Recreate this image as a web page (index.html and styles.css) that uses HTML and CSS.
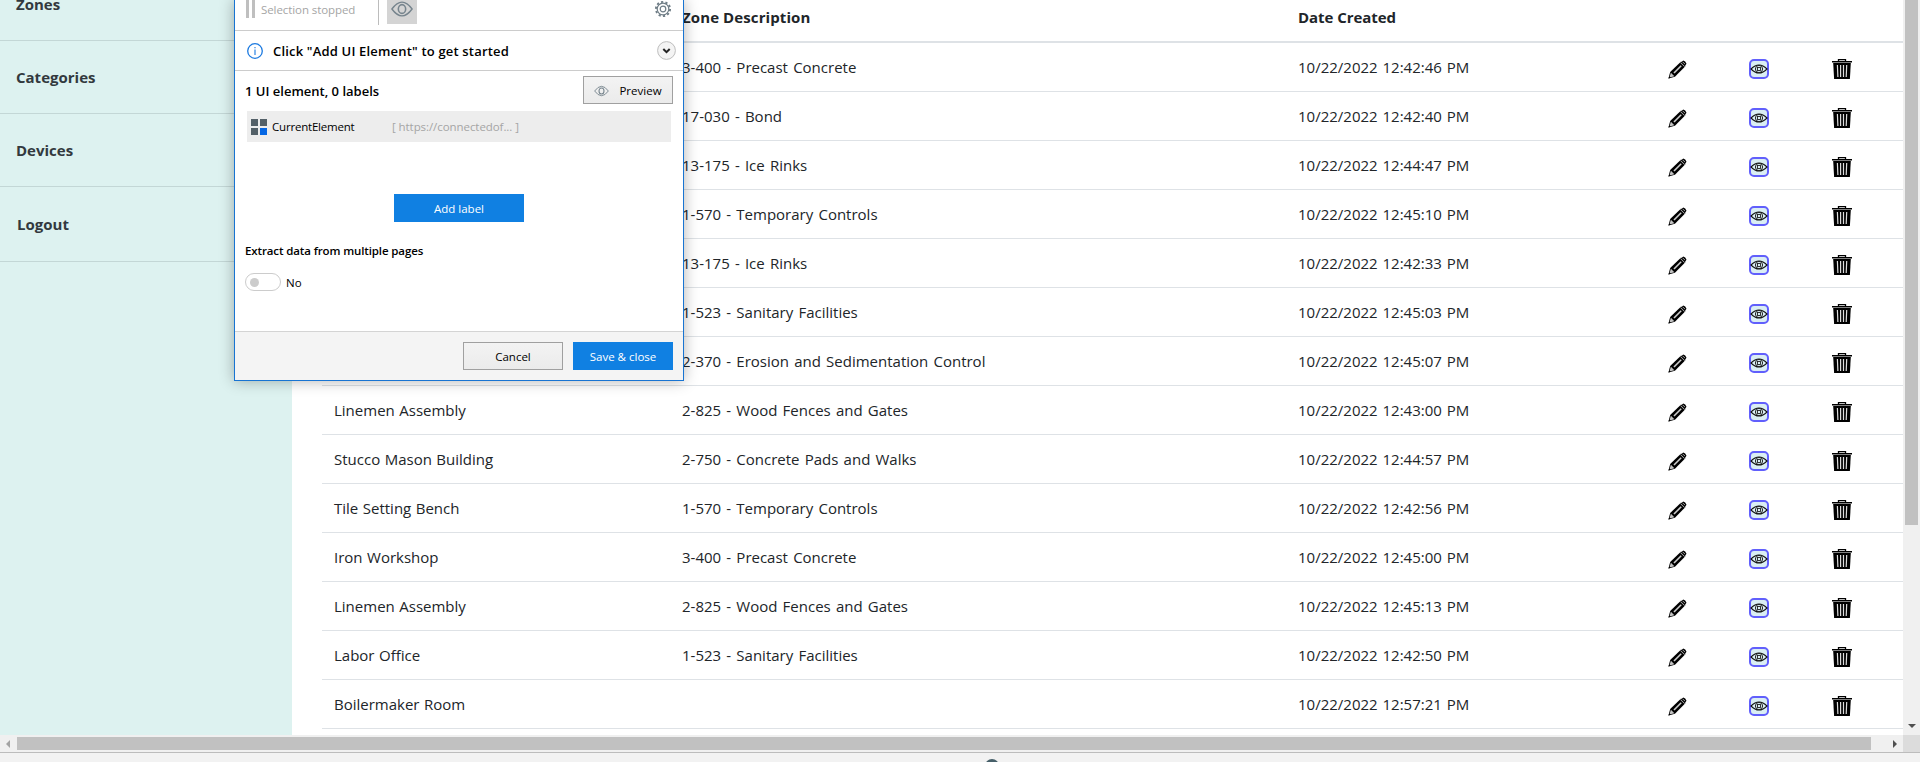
FILE: index.html
```html
<!DOCTYPE html>
<html lang="en">
<head>
<meta charset="utf-8">
<title>Zones</title>
<link rel="stylesheet" href="styles.css">
</head>
<body>
<svg width="0" height="0" class="defs">
  <symbol id="pencil" viewBox="0 0 20 20">
    <path d="M.5 19.500l1.800-6.800L13.800 1.500l4.700 4.700L7.300 17.700z" fill="#000"/>
    <path d="M1.500 18.500l1.500-5 3.700 3.700z" fill="#c4c4c4"/>
    <path d="M.5 19.500l.7-2.500 1.800 1.800z" fill="#000"/>
    <path d="M6.300 13.700l7.600-7.600" stroke="#ccc" stroke-width="1.700"/>
    <path d="M14.300 2l1.700-1.500q2.500.5 3.500 3.500l-1.600 2z" fill="#000"/>
    <path d="M13 2.600l4.400 4.400" stroke="#ccc" stroke-width=".9"/>
    <path d="M16 2.400l1.600 1.600" stroke="#ccc" stroke-width="1"/>
  </symbol>
  <symbol id="view" viewBox="0 0 20 20">
    <rect x="1" y="1" width="18" height="18" rx="4" fill="#daeef3" stroke="#615ffc" stroke-width="2"/>
    <path d="M2 10q8-8 16 0q-8 8-16 0z" fill="none" stroke="#111" stroke-width="1.100"/>
    <circle cx="10" cy="10" r="3.600" fill="none" stroke="#222" stroke-width="1"/>
    <rect x="8.500" y="8.500" width="3" height="3" fill="none" stroke="#222" stroke-width=".9"/>
  </symbol>
  <symbol id="trash" viewBox="0 0 20 20">
    <path d="M6.500 2V.6h7V2" fill="none" stroke="#000" stroke-width="1.300"/>
    <path d="M0 2h20v1.500H0z" fill="#000"/>
    <path d="M1.200 4h17.600L17.900 20H2.100z" fill="#000"/>
    <path d="M5.400 6l.5 12M8.600 6v12M11.500 6v12M14.700 6l-.5 12" stroke="#ddd" stroke-width="1.200"/>
  </symbol>
  <symbol id="eye" viewBox="0 0 24 18">
    <path d="M1 9q11-15 22 0q-11 15-22 0z" fill="none" stroke="#76848d" stroke-width="1.500"/>
    <ellipse cx="12" cy="9" rx="4" ry="4.800" fill="none" stroke="#76848d" stroke-width="1.700"/>
  </symbol>
</svg>
<div class="viewport">
  <nav class="sidebar">
    <a class="nav zones">Zones</a>
    <a class="nav">Categories</a>
    <a class="nav">Devices</a>
    <a class="nav logout">Logout</a>
  </nav>
  <main class="main">
    <div class="row head"><span></span><span>Zone Description</span><span class="created">Date Created</span></div>
    <div id="rows"></div>
  </main>
  <div class="vscroll"><div class="vthumb"></div><i class="down"></i></div>
</div>
<div class="hscroll"><i class="left"></i><div class="hthumb"></div><i class="right"></i><div class="corner"></div></div>
<div class="status"><i class="knob"></i></div>

<section class="dialog">
  <header class="tools">
    <i class="pause"></i><span class="stopped">Selection stopped</span><i class="sep"></i>
    <span class="eyebtn"><svg width="22" height="18"><use href="#eye"/></svg></span>
    <svg class="gear" width="18" height="18" viewBox="0 0 18 18" fill="none" stroke="#6f7d86"><circle cx="9" cy="9" r="7.100" stroke-width="1.900" stroke-dasharray="2.230 2.230"/><circle cx="9" cy="9" r="5.800" stroke-width="1.200"/><circle cx="9" cy="9" r="2.800" stroke-width="1.200"/></svg>
  </header>
  <div class="hint">
    <svg width="16" height="16" viewBox="0 0 16 16" fill="none" stroke="#1c7ae0"><circle cx="8" cy="8" r="7.300" stroke-width="1.300"/><path d="M8 6.500v5.500M8 4v1.300" stroke="#62a3ea" stroke-width="1.600"/></svg>
    <span>Click "Add UI Element" to get started</span>
    <svg class="chev" width="19" height="19" viewBox="0 0 19 19"><circle cx="9.500" cy="9.500" r="8.900" fill="#f4f4f4" stroke="#bdbdbd"/><path d="M6.300 8l3.200 3.200L12.700 8" fill="none" stroke="#222" stroke-width="2"/></svg>
  </div>
  <div class="body">
    <div class="summary"><span class="count">1 UI element, 0 labels</span><button class="btn preview"><svg width="15" height="12" viewBox="0 0 15 12"><use href="#eye" width="15" height="12"/></svg>Preview</button></div>
    <div class="element"><i class="grid"><b></b><b></b><b></b><b></b></i><span class="ename">CurrentElement</span><span class="url">[ https://connectedof... ]</span></div>
    <button class="btn primary add">Add label</button>
    <div class="extract">Extract data from multiple pages</div>
    <div class="toggle"><i class="switch"></i><span>No</span></div>
  </div>
  <footer class="foot"><button class="btn">Cancel</button><button class="btn primary">Save &amp; close</button></footer>
</section>
<script src="rows.js"></script>
</body>
</html>
```
FILE: rows.js
```js
const data = [
  ["", "3-400 - Precast Concrete", "12:42:46"],
  ["", "17-030 - Bond", "12:42:40"],
  ["", "13-175 - Ice Rinks", "12:44:47"],
  ["", "1-570 - Temporary Controls", "12:45:10"],
  ["", "13-175 - Ice Rinks", "12:42:33"],
  ["", "1-523 - Sanitary Facilities", "12:45:03"],
  ["", "2-370 - Erosion and Sedimentation Control", "12:45:07"],
  ["Linemen Assembly", "2-825 - Wood Fences and Gates", "12:43:00"],
  ["Stucco Mason Building", "2-750 - Concrete Pads and Walks", "12:44:57"],
  ["Tile Setting Bench", "1-570 - Temporary Controls", "12:42:56"],
  ["Iron Workshop", "3-400 - Precast Concrete", "12:45:00"],
  ["Linemen Assembly", "2-825 - Wood Fences and Gates", "12:45:13"],
  ["Labor Office", "1-523 - Sanitary Facilities", "12:42:50"],
  ["Boilermaker Room", "", "12:57:21"]
];
const icon = (id, size) => `<span><svg width="${size}" height="${size}"><use href="#${id}"/></svg></span>`;
document.getElementById("rows").innerHTML = data.map(([name, desc, time]) =>
  `<div class="row"><span class="name">${name}</span><span class="desc">${desc}</span><span class="date">10/22/2022 ${time} PM</span>${icon("pencil", 19)}${icon("view", 20)}${icon("trash", 20)}</div>`
).join("");
```
FILE: styles.css
```css
* { box-sizing: border-box; }
body { margin: 0; width: 1920px; height: 762px; overflow: hidden; background: #fff; color: #212529; font: 15px "Open Sans", "Noto Sans", sans-serif; }
.defs { position: absolute; }
svg { display: block; flex: none; }
.viewport { display: flex; height: 735px; overflow: hidden; }
.sidebar { width: 292px; background: #ddf2f0; color: #32393e; font-weight: 700; }
.nav { display: flex; align-items: center; height: 73px; padding: 0 0 0 16px; border-bottom: 1px solid #c3d7d6; }
.zones { height: 41px; padding-bottom: 31px; line-height: 9px; }
.nav.logout { height: 75px; padding-left: 17px; }
.main { flex: 1; padding-left: 30px; overflow: hidden; }
.row { display: grid; grid-template-columns: 348px 616px 370px 81px 83px 1fr; align-items: center; height: 49px; padding-left: 12px; border-bottom: 1px solid #dee2e6; white-space: nowrap; }
.row svg { margin-top: 4px; }
.head { height: 43px; padding-bottom: 7px; border-bottom-width: 2px; font-weight: 700; letter-spacing: .1px; }
.created { letter-spacing: -.05px; }
.name { word-spacing: .6px; }
.desc { word-spacing: 1.300px; }
.date { word-spacing: 1px; }
.vscroll { display: flex; flex-direction: column; justify-content: space-between; align-items: center; width: 17px; background: #f0f0f0; }
.vthumb { width: 13px; height: 525px; background: #c1c1c1; }
.down { margin-bottom: 7px; border: 4px solid transparent; border-top-color: #505050; border-bottom: 0; }
.hscroll { display: flex; align-items: center; height: 17px; background: #f0f0f0; }
.left { margin: 0 7px 0 6px; border: 4px solid transparent; border-right-color: #a3a3a3; border-left: 0; }
.hthumb { width: 1854px; height: 13px; background: #c1c1c1; }
.right { margin-left: 22px; border: 4px solid transparent; border-left-color: #505050; border-right: 0; }
.corner { width: 17px; height: 17px; margin-left: auto; background: #dcdcdc; }
.status { height: 10px; padding: 6px 0 0 985px; overflow: hidden; border-top: 1px solid #bcbcbc; background: #f2f2f2; }
.knob { display: block; width: 14px; height: 14px; border-radius: 50%; background: #465f69; }

.dialog { position: absolute; left: 234px; top: 0; display: flex; flex-direction: column; width: 450px; height: 381px; border: 1px solid #1874d2; border-top: 0; background: #fff; color: #000; font-size: 11.500px; white-space: nowrap; box-shadow: 0 0 14px rgba(0,0,0,.3); }
.tools { display: flex; height: 31px; padding-left: 11px; border-bottom: 1px solid #ccc; }
.pause { width: 9px; height: 18px; border: solid #bfbfbf; border-width: 0 3px; }
.stopped { width: 123px; padding: 2px 0 0 6px; color: #a5a5a5; letter-spacing: -.08px; }
.sep { width: 1px; height: 25px; background: #bcbcbc; }
.eyebtn { width: 30px; height: 24px; margin-left: 8px; padding-left: 4px; background: #d4d4d4; }
.gear { margin-left: 237px; }
.hint { display: flex; align-items: center; height: 40px; padding: 0 7px 0 12px; border-bottom: 1px solid #ccc; font-size: 13px; font-weight: 600; }
.hint span { margin-left: 10px; padding-top: 1px; letter-spacing: .18px; }
.chev { margin-left: auto; }
.body { display: flex; flex-direction: column; flex: 1; padding: 5px 10px 0; }
.summary { display: flex; align-items: center; justify-content: space-between; height: 28px; }
.count { padding-top: 1px; font-size: 13px; font-weight: 600; }
.btn { display: flex; align-items: center; justify-content: center; width: 100px; height: 28px; padding: 1px 0 0; border: 1px solid #a0a0a0; background: linear-gradient(#f3f3f3, #ebebeb); color: #000; font: inherit; }
.primary { border-color: #1080e2; background: #1080e2; color: #fff; }
.preview { gap: 10px; width: 90px; }
.element { display: flex; align-items: center; height: 31px; margin: 7px 2px 0; padding: 0 4px; background: #ededed; }
.grid { display: grid; grid-template-columns: 7px 7px; gap: 2px; }
.grid b { height: 7px; background: #536068; }
.grid b:last-child { background: #0567e4; }
.ename { width: 120px; margin-left: 5px; letter-spacing: -.2px; }
.url { color: #a5a5a5; letter-spacing: -.07px; }
.add { width: 130px; margin: 52px auto 0; }
.extract { margin-top: 20px; height: 18px; font-weight: 600; line-height: 18px; letter-spacing: -.12px; }
.toggle { display: flex; align-items: center; gap: 5px; margin-top: 13px; height: 18px; }
.switch { width: 36px; height: 18px; padding: 4px; border: 1px solid #ccc; border-radius: 9px; }
.switch::before { content: ""; display: block; width: 9px; height: 9px; border-radius: 50%; background: #ccc; }
.foot { display: flex; justify-content: flex-end; gap: 10px; height: 49px; padding: 10px 10px 0; border-top: 1px solid #d4d4d4; background: #f4f4f4; }
```
